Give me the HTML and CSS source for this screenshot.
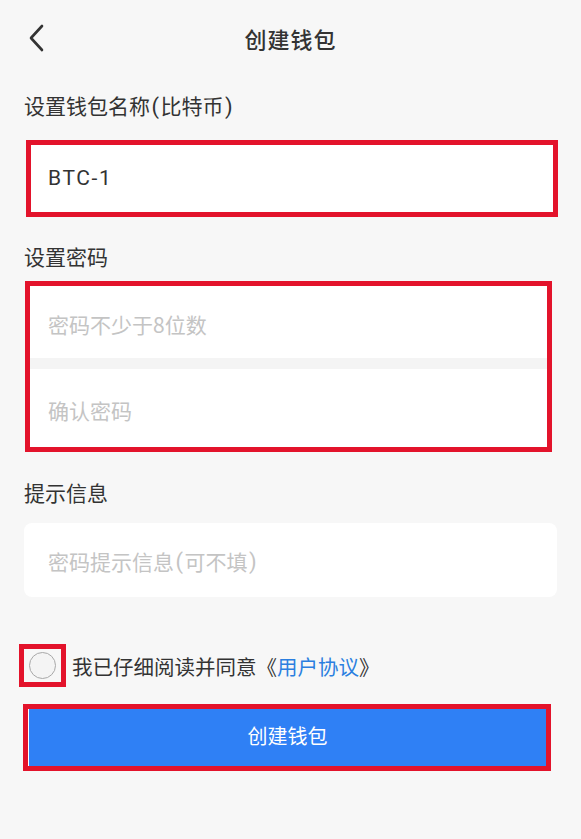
FILE: index.html
```html
<!DOCTYPE html>
<html lang="zh-CN">
<head>
<meta charset="utf-8">
<title>创建钱包</title>
<link rel="stylesheet" href="styles.css">
</head>
<body>
<div class="page">
  <header class="topbar">
    <span class="back" aria-label="返回">
      <svg width="16" height="28" viewBox="0 0 16 28"><path d="M14 2 L3 14 L14 26" fill="none" stroke="#333" stroke-width="2.6" stroke-linecap="round" stroke-linejoin="round"/></svg>
    </span>
    <h1 class="title">创建钱包</h1>
    <span></span>
  </header>

  <main class="content">
    <div class="label label-name">设置钱包名称<span class="p">(</span>比特币<span class="p">)</span></div>
    <div class="mark field-name">
      <div class="input value">BTC-1</div>
    </div>

    <div class="label label-pwd">设置密码</div>
    <div class="mark field-pwd">
      <div class="input input-pwd1 placeholder">密码不少于8位数</div>
      <div class="sep"></div>
      <div class="input input-pwd2 placeholder">确认密码</div>
    </div>

    <div class="label label-hint">提示信息</div>
    <div class="input hint placeholder">密码提示信息<span class="p">(</span>可不填<span class="p">)</span></div>

    <div class="agree">
      <span class="mark check"><span class="circle"></span></span>
      <span class="agree-text">我已仔细阅读并同意《<span class="link">用户协议</span>》</span>
    </div>

    <div class="mark btn-wrap">
      <button class="btn">创建钱包</button>
    </div>
  </main>
</div>
</body>
</html>
```

FILE: styles.css
```css
* { box-sizing: border-box; }
html, body { margin: 0; padding: 0; }
body {
  background: #f7f7f7;
  font-family: "Noto Sans CJK SC", Roboto, sans-serif;
  color: #333;
  width: 581px;
  height: 839px;
  overflow: hidden;
}
.topbar {
  height: 80px;
  display: grid;
  grid-template-columns: 1fr auto 1fr;
  align-items: center;
  padding: 0 28px 4px 28px;
}
.back { display: flex; align-items: center; height: 28px; }
.title {
  margin: 0;
  font-size: 22px;
  font-weight: 500;
  color: #333;
  letter-spacing: 1px;
  line-height: 30px;
}
.content { padding: 0 24px; }
.label {
  font-size: 21px;
  line-height: 28px;
  color: #333;
}
.p {
  font-family: Roboto, sans-serif;
  font-size: 22px;
  margin: 0 1.5px;
}
.label-name { margin-top: 11px; }
.label-pwd { margin-top: 25px; }
.label-hint { margin-top: 26px; }

.mark { border: 5px solid #e3132b; }

.input {
  background: #fff;
  display: flex;
  align-items: center;
  font-size: 21px;
}
.placeholder { color: #c4c4c4; }
.value {
  color: #333;
  font-family: Roboto, "Noto Sans CJK SC", sans-serif;
  font-size: 21px;
  letter-spacing: 1.6px;
}

.field-name {
  margin: 19px -1px 0 2px;
  height: 77px;
}
.field-name .input { height: 100%; padding-left: 17px; padding-bottom: 2px; }

.field-pwd {
  margin: 11px 5px 0 1px;
  height: 171px;
  display: flex;
  flex-direction: column;
  background: #fff;
}
.input-pwd1 { height: 72px; padding-left: 18px; padding-top: 4px; }
.sep { height: 11px; background: #f4f4f4; }
.input-pwd2 { flex: 1; padding-left: 18px; padding-top: 4px; }

.hint {
  margin-top: 17px;
  height: 74px;
  border-radius: 8px;
  padding-left: 24px;
  padding-top: 2px;
}

.agree {
  margin: 47px 0 0 -5px;
  display: flex;
  align-items: center;
  gap: 6px;
}
.check {
  width: 47px;
  height: 43px;
  display: flex;
  align-items: center;
  justify-content: center;
}
.circle {
  width: 27px;
  height: 27px;
  border-radius: 50%;
  border: 1.5px solid #a8a8a8;
  background: #f4f4f4;
}
.agree-text { font-size: 20.5px; color: #333; }
.link { color: #2b7fe0; }

.btn-wrap {
  margin: 17px 6px 0 -1px;
  height: 67px;
  display: flex;
}
.btn {
  flex: 1;
  border: 0;
  border-left: 1px solid #fff;
  background: #2f80f5;
  color: #fff;
  font-family: "Noto Sans CJK SC", Roboto, sans-serif;
  font-size: 20px;
  padding: 0 0 4px;
}
```
